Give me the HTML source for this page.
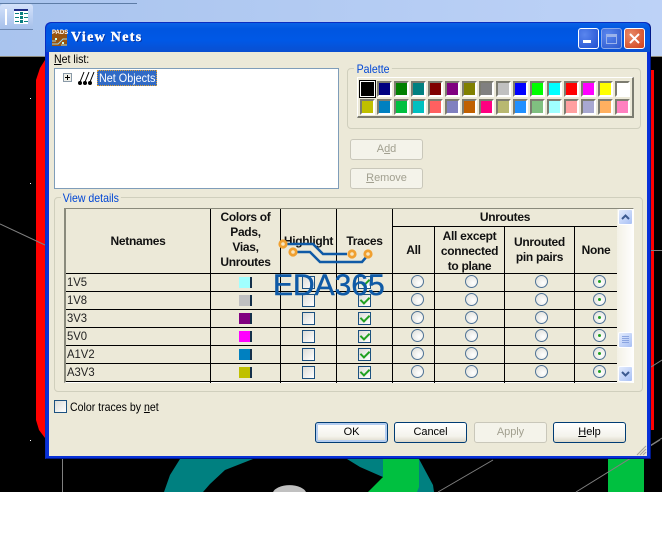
<!DOCTYPE html>
<html><head><meta charset="utf-8"><style>
html,body{margin:0;padding:0;background:#fff}
#r{position:relative;width:662px;height:535px;overflow:hidden;font-family:"Liberation Sans",sans-serif;font-size:12px;color:#000;background:#fff}
#r div{position:absolute;box-sizing:border-box}
.t{white-space:nowrap;line-height:14px;transform:scaleX(.88);transform-origin:left center}
.n{white-space:nowrap;line-height:14px;color:#222;transform:scaleX(.94);transform-origin:left center}
.c{text-align:center;font-weight:bold;line-height:15px;color:#111;letter-spacing:-.3px;white-space:nowrap}
.v{background:#000}.h{background:#000;height:1px}
.s{width:15px;height:16px;border:2px solid;border-color:#7c7c70 #fff #fff #7c7c70}
.b{width:73px;height:21px;border:1px solid #003c74;border-radius:3px;background:linear-gradient(#fff,#f4f3ec 70%,#dcd8c8);text-align:center;line-height:19px;color:#000;font-size:11px;letter-spacing:-.05px}
.d{border-color:#c9c7ba;background:#f4f3ea;color:#a2a090}
.k{width:13px;height:13px;border:1px solid #1c5180;background:linear-gradient(135deg,#dcdcd7,#fff)}
.k.y::after{content:"";position:absolute;left:3px;top:0;width:4px;height:7px;border:solid #21a121;border-width:0 2px 2px 0;transform:rotate(45deg)}
.o{width:13px;height:13px;border:1px solid #4f7396;border-radius:50%;background:radial-gradient(circle at 65% 65%,#fff,#dcdcd6)}
.o.y::after{content:"";position:absolute;left:4px;top:4px;width:3px;height:3px;border-radius:50%;background:#21a121}
.w{width:13px;height:11px;border-right:2px solid #14304a}
.wb{width:21px;height:21px;border:1px solid #fff;border-radius:3px}
.sb{width:15px;height:16px;left:618px;border:1px solid #fff;border-radius:2px;background:#c4d4f8;background-image:linear-gradient(135deg,#e4ecfd,#a8c0f5)}
</style></head><body><div id="r">
<svg style="position:absolute;left:0;top:0" width="662" height="57" viewBox="0 0 662 57">
<defs><linearGradient id="g1" x1="0" x2="1" y1="0" y2="0"><stop offset="0" stop-color="#a9c4ee"/><stop offset="1" stop-color="#bdd2f7"/></linearGradient>
<linearGradient id="g2" x1="0" x2="0" y1="0" y2="1"><stop offset="0" stop-color="#d4e2fb"/><stop offset="1" stop-color="#a6c0ea"/></linearGradient></defs>
<rect x="0" y="0" width="662" height="56" fill="url(#g1)"/>
<rect x="0" y="3" width="137" height="1" fill="#5d7ca6"/>
<rect x="0" y="4" width="33" height="25" rx="3" fill="url(#g2)"/>
<rect x="0" y="29" width="33" height="1" fill="#6c87b0"/>
<rect x="0" y="56" width="662" height="1" fill="#8d8a7c"/>
</svg>
<div style="left:0;top:57px;width:662px;height:435px;background:#000"></div>
<div style="left:5px;top:9px;width:2px;height:16px;background:#fff"></div>
<div style="left:14px;top:9px;width:14px;height:15px;background:#fff"></div>
<div style="left:14px;top:9px;width:14px;height:2px;background:#1c2a86"></div>
<div style="left:15px;top:13px;width:4px;height:1px;background:#0a7f7f"></div><div style="left:20px;top:12px;width:3px;height:3px;background:#0a7f7f"></div><div style="left:24px;top:13px;width:4px;height:1px;background:#0a7f7f"></div>
<div style="left:15px;top:17px;width:4px;height:1px;background:#0a7f7f"></div><div style="left:20px;top:16px;width:3px;height:3px;background:#0a7f7f"></div><div style="left:24px;top:17px;width:4px;height:1px;background:#0a7f7f"></div>
<div style="left:15px;top:21px;width:4px;height:1px;background:#0a7f7f"></div><div style="left:20px;top:20px;width:3px;height:3px;background:#0a7f7f"></div><div style="left:24px;top:21px;width:4px;height:1px;background:#0a7f7f"></div>

<svg style="position:absolute;left:0;top:0" width="662" height="535" viewBox="0 0 662 535">
<path d="M45 60L40 68L36 80V420L39 430L45 438Z" fill="#f00"/>
<path d="M651 70H654V430H651Z" fill="#f00"/>
<path d="M180 459L170 475L164 492H203L210 484L225 470L253 459Z" fill="#008080"/>
<path d="M347 459L360 467L383 477V459Z" fill="#008080"/>
<path d="M419 459L433 485L434 492H416V459Z" fill="#008080"/>
<path d="M383 459H419V487L417 492H368L383 477Z" fill="#00c040"/>
<rect x="608" y="459" width="36" height="33" fill="#00c040"/>
<path d="M273 492A17 9 0 0 1 306 492Z" fill="#c0c0c0"/>
<g stroke="#808080" fill="none"><path d="M0 224L45 245M62.500 459V492M438 492L493 460M576 492L660 440M651 445L662 438M651 250.500H662M651 367L662 360"/></g>
<g fill="#fff"><rect x="30" y="98" width="1" height="1"/><rect x="30" y="183" width="1" height="1"/><rect x="30" y="440" width="1" height="1"/></g>
</svg>

<!-- window -->
<div style="left:45px;top:22px;width:606px;height:437px;background:#0831d9;border-radius:6px 6px 0 0;border:1px solid #0a2ec0;border-bottom-color:#00188a;border-right-color:#00188a"></div>
<div style="left:46px;top:23px;width:604px;height:29px;background:linear-gradient(#0a62e6,#0056e0 20%,#0058e6 60%,#0a4fd0);border-radius:6px 6px 0 0"></div>
<div style="left:49px;top:52px;width:598px;height:404px;background:#ece9d8"></div>

<!-- title -->
<div style="left:52px;top:30px;width:15px;height:16px;background:#9a5410"></div>
<div style="left:52px;top:30px;font-size:6px;line-height:7px;font-weight:bold;color:#fff;width:15px;text-align:center;white-space:nowrap">PADS</div>
<svg style="position:absolute;left:52px;top:37px" width="15" height="9"><path d="M0 7H6L11 2H15M0 4H4M9 8H15" stroke="#9fd8e8" fill="none"/><rect x="3" y="1" width="2" height="2" fill="#cfe"/><rect x="10" y="5" width="2" height="2" fill="#cfe"/></svg>
<div style="left:71px;top:31px;white-space:nowrap;line-height:14px;font-family:'Liberation Serif',serif;font-weight:bold;font-size:14px;letter-spacing:1.3px;color:#fff;-webkit-text-stroke:.4px #fff;text-shadow:1px 1px #0a2a90">View Nets</div>
<div class="wb" style="left:578px;top:28px;background:radial-gradient(circle at 30% 30%,#5a86ee,#1f4fd0)"></div>
<div style="left:583px;top:40px;width:8px;height:3px;background:#fff"></div>
<div class="wb" style="left:601px;top:28px;background:radial-gradient(circle at 30% 30%,#5a86ee,#2a57cc);border-color:#8aa8e8"></div>
<div style="left:606px;top:34px;width:11px;height:10px;border:1px solid #9ab2ea;border-top-width:3px"></div>
<div class="wb" style="left:624px;top:28px;background:radial-gradient(circle at 30% 30%,#e88a68,#d0401a)"></div>
<svg style="position:absolute;left:628px;top:32px" width="13" height="13"><path d="M2 2L11 11M11 2L2 11" stroke="#fff" stroke-width="2"/></svg>
<svg style="position:absolute;left:636px;top:445px" width="11" height="11"><path d="M1 10L10 1M4 10L10 4M7 10L10 7" stroke="#a8a69a" stroke-width="1.200"/></svg>

<!-- net list -->
<div class="t" style="left:54px;top:52px"><u>N</u>et list:</div>
<div style="left:54px;top:68px;width:285px;height:121px;background:#fff;border:1px solid #7f9db9"></div>
<div style="left:63px;top:73px;width:9px;height:9px;border:1px solid #8a9aa8;background:#f0f0ea"></div>
<div style="left:65px;top:77px;width:5px;height:1px;background:#000"></div><div style="left:67px;top:75px;width:1px;height:5px;background:#000"></div>
<svg style="position:absolute;left:77px;top:70px" width="18" height="16"><path d="M3 12L7 2M8 12L12 2M13 12L17 2" stroke="#000"/><circle cx="3" cy="13" r="2"/><circle cx="8" cy="13" r="2"/><circle cx="13" cy="13" r="2"/></svg>
<div style="left:97px;top:70px;width:60px;height:16px;background:#316ac5;border:1px dotted #e0a030"></div>
<div class="t" style="left:99px;top:71px;color:#fff;transform:scaleX(.9)">Net Objects</div>

<!-- palette -->
<div style="left:347px;top:68px;width:294px;height:61px;border:1px solid #d0cfbd;border-radius:4px"></div>
<div class="t" style="left:354px;top:62px;padding:0 3px;background:#ece9d8;color:#0046d5">Palette</div>
<div style="left:357px;top:77px;width:277px;height:41px;background:#ece9d8;border:1px solid;border-color:#fff #7c7c70 #7c7c70 #fff;border-width:1px 2px 2px 1px"></div>
<div style="left:359px;top:80px;width:17px;height:18px;background:#000;border:1px solid #000;box-shadow:inset 0 0 0 1px #fff"></div>
<div class="s" style="left:377px;top:81px;background:#000080"></div><div class="s" style="left:394px;top:81px;background:#008000"></div><div class="s" style="left:411px;top:81px;background:#008080"></div><div class="s" style="left:428px;top:81px;background:#800000"></div><div class="s" style="left:445px;top:81px;background:#800080"></div><div class="s" style="left:462px;top:81px;background:#808000"></div><div class="s" style="left:479px;top:81px;background:#808080"></div><div class="s" style="left:496px;top:81px;background:#c0c0c0"></div><div class="s" style="left:513px;top:81px;background:#00f"></div><div class="s" style="left:530px;top:81px;background:#0f0"></div><div class="s" style="left:547px;top:81px;background:#0ff"></div><div class="s" style="left:564px;top:81px;background:#f00"></div><div class="s" style="left:581px;top:81px;background:#f0f"></div><div class="s" style="left:598px;top:81px;background:#ff0"></div><div class="s" style="left:615px;top:81px;background:#fff"></div>
<div class="s" style="left:360px;top:99px;background:#c0c000"></div><div class="s" style="left:377px;top:99px;background:#0080c0"></div><div class="s" style="left:394px;top:99px;background:#00c040"></div><div class="s" style="left:411px;top:99px;background:#00c0c0"></div><div class="s" style="left:428px;top:99px;background:#ff6060"></div><div class="s" style="left:445px;top:99px;background:#8080c0"></div><div class="s" style="left:462px;top:99px;background:#c06000"></div><div class="s" style="left:479px;top:99px;background:#ff0080"></div><div class="s" style="left:496px;top:99px;background:#b8b870"></div><div class="s" style="left:513px;top:99px;background:#2090ff"></div><div class="s" style="left:530px;top:99px;background:#80c080"></div><div class="s" style="left:547px;top:99px;background:#a0ffff"></div><div class="s" style="left:564px;top:99px;background:#ffa0a0"></div><div class="s" style="left:581px;top:99px;background:#a8a8d0"></div><div class="s" style="left:598px;top:99px;background:#ffb060"></div><div class="s" style="left:615px;top:99px;background:#ff80c0"></div>

<div class="b d" style="left:350px;top:139px">A<u>d</u>d</div>
<div class="b d" style="left:350px;top:168px"><u>R</u>emove</div>

<!-- view details -->
<div style="left:54px;top:197px;width:589px;height:195px;border:1px solid #d0cfbd;border-radius:4px"></div>
<div class="t" style="left:61px;top:191px;padding:0 2px;background:#ece9d8;color:#0046d5">View details</div>
<div style="left:64px;top:208px;width:570px;height:175px;background:#ece9d8;border:1px solid;border-color:#8a8a7c #fff #fff #8a8a7c;border-width:1px 1px 1px 2px"></div>

<div class="v" style="left:210px;top:209px;width:1px;height:174px"></div>
<div class="v" style="left:280px;top:209px;width:1px;height:174px"></div>
<div class="v" style="left:336px;top:209px;width:1px;height:174px"></div>
<div class="v" style="left:392px;top:209px;width:1px;height:174px"></div>
<div class="v" style="left:434px;top:226px;width:1px;height:157px"></div>
<div class="v" style="left:504px;top:226px;width:1px;height:157px"></div>
<div class="v" style="left:574px;top:226px;width:1px;height:157px"></div>
<div class="h" style="left:392px;top:226px;width:225px"></div>
<div class="h" style="left:66px;top:273px;width:551px"></div><div class="h" style="left:66px;top:291px;width:551px"></div><div class="h" style="left:66px;top:309px;width:551px"></div><div class="h" style="left:66px;top:327px;width:551px"></div><div class="h" style="left:66px;top:345px;width:551px"></div><div class="h" style="left:66px;top:363px;width:551px"></div><div class="h" style="left:66px;top:381px;width:551px"></div>

<div class="c" style="left:66px;top:234px;width:144px">Netnames</div>
<div class="c" style="left:211px;top:210px;width:69px">Colors of<br>Pads,<br>Vias,<br>Unroutes</div>
<div class="c" style="left:281px;top:234px;width:55px">Highlight</div>
<div class="c" style="left:337px;top:234px;width:55px">Traces</div>
<div class="c" style="left:393px;top:210px;width:224px">Unroutes</div>
<div class="c" style="left:393px;top:243px;width:41px">All</div>
<div class="c" style="left:435px;top:229px;width:69px">All except<br>connected<br>to plane</div>
<div class="c" style="left:505px;top:235px;width:69px">Unrouted<br>pin pairs</div>
<div class="c" style="left:575px;top:243px;width:42px">None</div>

<div class="n" style="left:67px;top:275px">1V5</div><div class="n" style="left:67px;top:293px">1V8</div><div class="n" style="left:67px;top:311px">3V3</div><div class="n" style="left:67px;top:329px">5V0</div><div class="n" style="left:67px;top:347px">A1V2</div><div class="n" style="left:67px;top:365px">A3V3</div>

<div class="w" style="left:239px;top:277px;background:#a0ffff"></div><div class="w" style="left:239px;top:295px;background:#c0c0c0"></div><div class="w" style="left:239px;top:313px;background:#800080"></div><div class="w" style="left:239px;top:331px;background:#f0f"></div><div class="w" style="left:239px;top:349px;background:#0080c0"></div><div class="w" style="left:239px;top:367px;background:#c0c000"></div>

<div class="k" style="left:302px;top:276px"></div><div class="k" style="left:302px;top:294px"></div><div class="k" style="left:302px;top:312px"></div><div class="k" style="left:302px;top:330px"></div><div class="k" style="left:302px;top:348px"></div><div class="k" style="left:302px;top:366px"></div>
<div class="k y" style="left:358px;top:276px"></div><div class="k y" style="left:358px;top:294px"></div><div class="k y" style="left:358px;top:312px"></div><div class="k y" style="left:358px;top:330px"></div><div class="k y" style="left:358px;top:348px"></div><div class="k y" style="left:358px;top:366px"></div>

<div class="o" style="left:411px;top:275px"></div><div class="o" style="left:465px;top:275px"></div><div class="o" style="left:535px;top:275px"></div><div class="o y" style="left:593px;top:275px"></div>
<div class="o" style="left:411px;top:293px"></div><div class="o" style="left:465px;top:293px"></div><div class="o" style="left:535px;top:293px"></div><div class="o y" style="left:593px;top:293px"></div>
<div class="o" style="left:411px;top:311px"></div><div class="o" style="left:465px;top:311px"></div><div class="o" style="left:535px;top:311px"></div><div class="o y" style="left:593px;top:311px"></div>
<div class="o" style="left:411px;top:329px"></div><div class="o" style="left:465px;top:329px"></div><div class="o" style="left:535px;top:329px"></div><div class="o y" style="left:593px;top:329px"></div>
<div class="o" style="left:411px;top:347px"></div><div class="o" style="left:465px;top:347px"></div><div class="o" style="left:535px;top:347px"></div><div class="o y" style="left:593px;top:347px"></div>
<div class="o" style="left:411px;top:365px"></div><div class="o" style="left:465px;top:365px"></div><div class="o" style="left:535px;top:365px"></div><div class="o y" style="left:593px;top:365px"></div>

<!-- scrollbar -->
<div style="left:617px;top:209px;width:17px;height:174px;background:linear-gradient(90deg,#f3f1e6,#fff)"></div>
<div class="sb" style="top:209px"></div>
<svg style="position:absolute;left:621px;top:214px" width="9" height="6"><path d="M1 5L4.500 1.500L8 5" stroke="#3c5a90" stroke-width="2" fill="none"/></svg>
<div class="sb" style="top:332px"></div>
<svg style="position:absolute;left:622px;top:336px" width="7" height="8"><path d="M0 .5H7M0 2.500H7M0 4.500H7M0 6.500H7" stroke="#8aa4e0"/></svg>
<div class="sb" style="top:366px"></div>
<svg style="position:absolute;left:621px;top:371px" width="9" height="6"><path d="M1 1L4.500 4.500L8 1" stroke="#3c5a90" stroke-width="2" fill="none"/></svg>

<!-- watermark -->
<svg style="position:absolute;left:0;top:0" width="662" height="535" viewBox="0 0 662 535">
<path d="M287 244H313L323 254H347M297 252H310L320 262H362L368 255" stroke="#0f5aa6" stroke-width="2.500" fill="none"/>
<g fill="#f7e6c0" stroke="#f0a030" stroke-width="2.800"><circle cx="283" cy="244" r="3.200"/><circle cx="293" cy="252" r="3.200"/><circle cx="352" cy="254" r="3.200"/><circle cx="368" cy="254" r="3.200"/></g>
<text x="273" y="295" font-family="Liberation Sans" font-size="30" fill="#0f5aa6" stroke="#0f5aa6" stroke-width=".5">EDA365</text>
</svg>

<!-- bottom -->
<div class="k" style="left:54px;top:400px"></div>
<div class="t" style="left:70px;top:400px"><span>Color traces by <u>n</u>et</span></div>
<div class="b" style="left:315px;top:422px;box-shadow:inset 0 0 0 2px #b4cdf0">OK</div>
<div class="b" style="left:394px;top:422px">Cancel</div>
<div class="b d" style="left:474px;top:422px">Apply</div>
<div class="b" style="left:553px;top:422px"><u>H</u>elp</div>
</div></body></html>
